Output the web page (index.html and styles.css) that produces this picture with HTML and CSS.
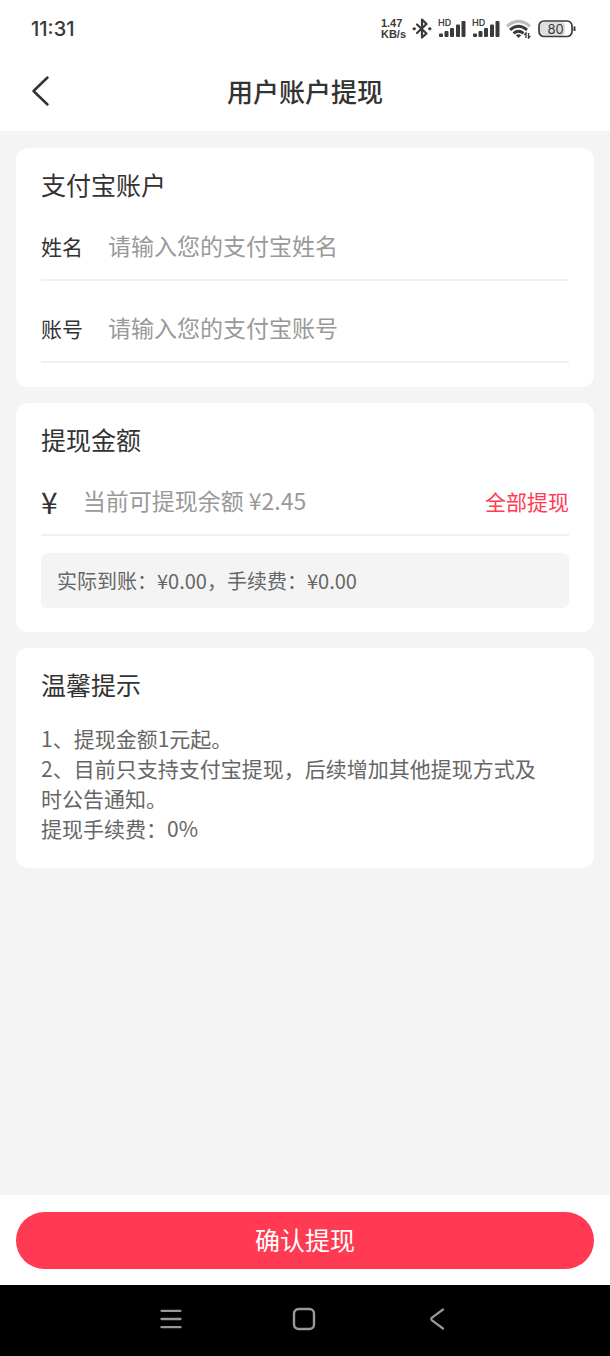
FILE: index.html
```html
<!DOCTYPE html>
<html lang="zh-CN">
<head>
<meta charset="utf-8">
<meta name="viewport" content="width=device-width, initial-scale=1">
<title>用户账户提现</title>
<link rel="stylesheet" href="styles.css">
</head>
<body>
<div class="status-bar">
  <time class="clock">11:31</time>
  <div class="status-icons">
    <div class="net-speed"><span>1.47</span><span>KB/s</span></div>
    <svg class="bluetooth" width="20" height="22" viewBox="0 0 20 22" fill="none" stroke="#3a3a3a" stroke-width="2.200" stroke-linejoin="round" stroke-linecap="round"><path d="M5 6.500 14.500 15.500 10 19.500V1.500l4.500 4.500L5 15"/><path d="M2 10.800h.4M17.600 10.800h.4" stroke-width="3"/></svg>
    <div class="signal">
      <span class="hd">HD</span>
      <svg width="28" height="18" viewBox="0 0 28 18" fill="#3a3a3a"><rect x="1" y="13.500" width="4" height="3.500" rx="1"/><rect x="6.500" y="11" width="4" height="6" rx="1"/><rect x="12" y="8" width="4" height="9" rx="1"/><rect x="18" y="4.500" width="4" height="12.500" rx="1"/><rect x="23.500" y="1" width="4" height="16" rx="1"/></svg>
    </div>
    <div class="signal">
      <span class="hd">HD</span>
      <svg width="28" height="18" viewBox="0 0 28 18" fill="#3a3a3a"><rect x="1" y="13.500" width="4" height="3.500" rx="1"/><rect x="6.500" y="11" width="4" height="6" rx="1"/><rect x="12" y="8" width="4" height="9" rx="1"/><rect x="18" y="4.500" width="4" height="12.500" rx="1"/><rect x="23.500" y="1" width="4" height="16" rx="1"/></svg>
    </div>
    <svg class="wifi" width="26" height="20" viewBox="0 0 26 20" fill="none" stroke="#3a3a3a" stroke-width="3"><path d="M1 7.300Q12.500-2.500 24 7.300" stroke="#bdbdbd"/><path d="M4 10.800Q12.500 3.800 21 10.800"/><path d="M7.500 14.300Q12.500 10.300 17.500 14.300"/><path d="M9.800 16.200Q12.500 14.300 15.200 16.200L12.500 19z" fill="#3a3a3a" stroke="none"/><path d="M20 19v-5L18.300 16M22.500 14v5l1.800-2" stroke-width="1.300"/></svg>
    <svg class="battery" width="38" height="18" viewBox="0 0 38 18"><rect x="2" y="2" width="25" height="14" rx="4" fill="#dedede"/><rect x="1" y="1" width="33" height="15.500" rx="5" fill="none" stroke="#3a3a3a" stroke-width="1.700"/><path d="M36.500 6.500v4.500" stroke="#3a3a3a" stroke-width="2"/><text class="battery-level" x="17.500" y="13.500" text-anchor="middle">80</text></svg>
  </div>
</div>
<header class="page-header">
  <button class="back" type="button" aria-label="返回"><svg width="20" height="32" viewBox="0 0 20 32" fill="none" stroke="#333" stroke-width="2.500" stroke-linecap="round" stroke-linejoin="round"><path d="M17.500 2.500 3.500 16l14 13.500"/></svg></button>
  <h1>用户账户提现</h1>
</header>
<main class="content">
  <section class="card">
    <h2>支付宝账户</h2>
    <div class="fields">
      <div class="field"><label for="name">姓名</label><input id="name" type="text" placeholder="请输入您的支付宝姓名"></div>
      <div class="field"><label for="account">账号</label><input id="account" type="text" placeholder="请输入您的支付宝账号"></div>
    </div>
  </section>
  <section class="card">
    <h2>提现金额</h2>
    <div class="field"><label class="currency" for="amount">¥</label><input id="amount" type="text" inputmode="decimal" placeholder="当前可提现余额 ¥2.45"><button class="all" type="button">全部提现</button></div>
    <p class="summary">实际到账：¥0.00，手续费：¥0.00</p>
  </section>
  <section class="card">
    <h2>温馨提示</h2>
    <div class="tips">
      <p>1、提现金额1元起。</p>
      <p>2、目前只支持支付宝提现，后续增加其他提现方式及时公告通知。</p>
      <p>提现手续费：0%</p>
    </div>
  </section>
</main>
<footer class="action-bar"><button class="submit" type="button">确认提现</button></footer>
<nav class="system-nav">
  <button type="button" aria-label="菜单"><svg width="24" height="24" viewBox="0 0 24 24" fill="none" stroke="#999" stroke-width="2.300" stroke-linecap="round"><path d="M2.500 3.800h19M2.500 12h19M2.500 20.200h19"/></svg></button>
  <button type="button" aria-label="主页"><svg width="24" height="24" viewBox="0 0 24 24" fill="none" stroke="#999" stroke-width="2.400"><rect x="2" y="2" width="20" height="20" rx="4.500"/></svg></button>
  <button type="button" aria-label="返回"><svg width="24" height="24" viewBox="0 0 24 24" fill="none" stroke="#999" stroke-width="2.200" stroke-linecap="round" stroke-linejoin="round"><path d="M18 2.500 7 10.700q-1.500 1.300 0 2.600L18 21.500"/></svg></button>
</nav>
</body>
</html>
```

FILE: styles.css
```css
* {
  box-sizing: border-box;
}

body {
  display: flex;
  flex-direction: column;
  min-height: 100vh;
  margin: 0;
  background: #f4f4f4;
  color: #333;
  font-family: "Noto Sans CJK SC", sans-serif;
}

h1,
h2,
p {
  margin: 0;
  font-weight: 400;
}

button {
  padding: 0;
  border: 0;
  background: none;
  font: inherit;
}

svg {
  display: block;
}

.status-bar {
  display: flex;
  align-items: center;
  justify-content: space-between;
  height: 54px;
  padding: 4px 34px 0 31px;
  background: #fff;
}

.clock {
  color: #3a3a3a;
  font-family: Inter, sans-serif;
  font-size: 20px;
  font-weight: 500;
}

.status-icons {
  display: flex;
  align-items: center;
  gap: 6px;
}

.net-speed {
  display: flex;
  flex-direction: column;
  color: #3a3a3a;
  font-family: "Liberation Sans", sans-serif;
  font-size: 11px;
  font-weight: 700;
  line-height: 11px;
}

.signal {
  position: relative;
}

.hd {
  position: absolute;
  top: -1px;
  left: 0;
  color: #3a3a3a;
  font-family: Inter, sans-serif;
  font-size: 9px;
  font-weight: 600;
  line-height: 8px;
}

.battery-level {
  fill: #3a3a3a;
  font-family: Inter, sans-serif;
  font-size: 13px;
}

.page-header {
  display: grid;
  grid-template-columns: 48px 1fr 48px;
  align-items: center;
  height: 77px;
  padding: 0 16px 3px;
  background: #fff;
}

.back {
  justify-self: center;
}

h1 {
  font-size: 26px;
  font-weight: 500;
  line-height: 36px;
  text-align: center;
}

.content {
  display: flex;
  flex: 1;
  flex-direction: column;
  gap: 16px;
  padding: 17px 16px 16px;
}

.card {
  padding: 22px 25px 24px;
  border-radius: 12px;
  background: #fff;
}

h2 {
  margin-bottom: 15px;
  font-size: 25px;
  line-height: 28px;
}

.fields {
  display: grid;
  gap: 14px;
}

.field {
  display: flex;
  align-items: center;
  gap: 25px;
  height: 68px;
  border-bottom: 2px solid #f0f0f0;
}

label {
  font-size: 21px;
}

.currency {
  font-size: 30px;
}

input {
  flex: 1;
  min-width: 0;
  padding: 0 0 2px;
  border: 0;
  outline: 0;
  background: none;
  color: #333;
  font: inherit;
  font-size: 23px;
}

input::placeholder {
  color: #999;
}

.all {
  color: #ff3a52;
  font-size: 21px;
}

.summary {
  margin-top: 17px;
  padding: 13px 16px 12px;
  border-radius: 6px;
  background: #f4f4f4;
  color: #666;
  font-size: 20px;
  line-height: 30px;
}

.tips {
  padding: 10px 14px 1px 0;
  color: #666;
  font-size: 21px;
  line-height: 30px;
}

.action-bar {
  padding: 17px 16px 16px;
  background: #fff;
}

.submit {
  display: block;
  width: 100%;
  height: 57px;
  padding-bottom: 3px;
  border-radius: 29px;
  background: #ff3a52;
  color: #fff;
  font-size: 25px;
}

.system-nav {
  display: flex;
  align-items: center;
  justify-content: center;
  gap: 109px;
  height: 71px;
  padding: 0 3px 4px 0;
  background: #000;
}
```
